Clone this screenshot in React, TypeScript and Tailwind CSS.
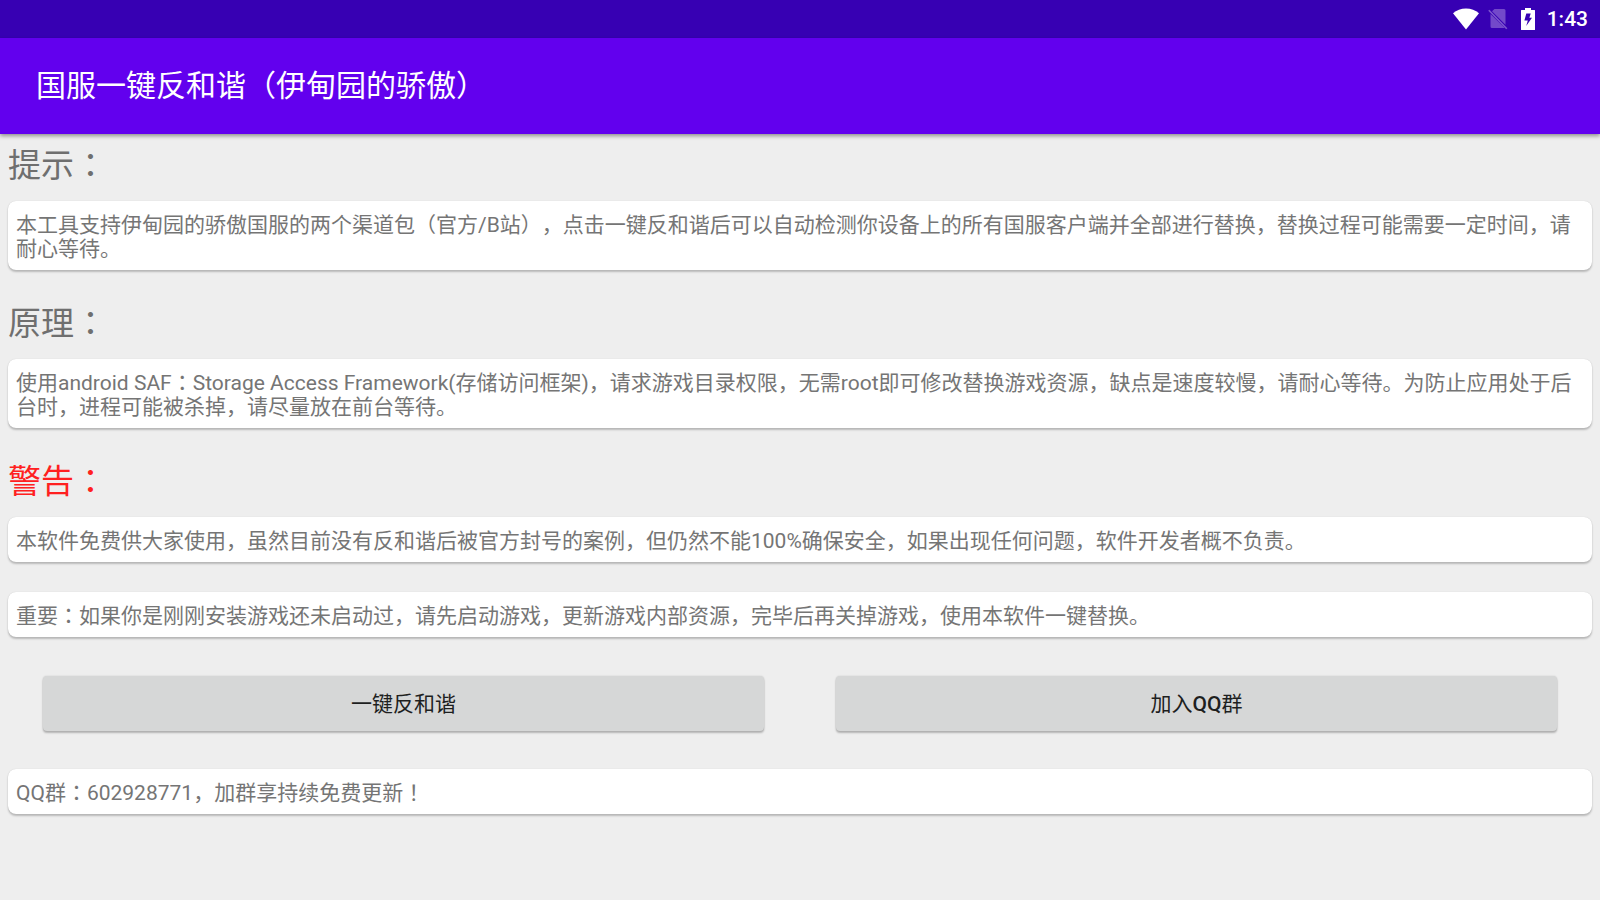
import { Fragment, type ReactNode } from "react";

/* Colons and exclamation marks are set in the middle of their full-width box. */
function Text({ children }: { children: string }) {
  return (
    <>
      {children.split(/([：！])/).map((part, i) =>
        part === "：" || part === "！" ? (
          <span key={i} lang="zh-TW" className="font-[Roboto,'Noto_Sans_CJK_TC',sans-serif]">
            {part}
          </span>
        ) : (
          <Fragment key={i}>{part}</Fragment>
        ),
      )}
    </>
  );
}

function Heading({ children, className = "text-[#6f6f6f]" }: { children: string; className?: string }) {
  return (
    <h2 className={`px-2 pt-[9px] pb-3 text-[33px] leading-[46px] ${className}`}>
      <Text>{children}</Text>
    </h2>
  );
}

function Card({ children }: { children: string }) {
  return (
    <p className="mx-2 mb-[22px] rounded-lg bg-white px-2 pt-3 pb-[9px] text-[21px] leading-6 text-[#757575] shadow-[0_2px_2px_rgba(0,0,0,0.22),0_0_1px_rgba(0,0,0,0.18)]">
      <Text>{children}</Text>
    </p>
  );
}

function ActionButton({ children }: { children: ReactNode }) {
  return (
    <button
      type="button"
      className="h-[55px] flex-1 cursor-pointer rounded-[4px] bg-[#d6d7d7] text-[21px] leading-6 text-[#1e1f1f] shadow-[0_2px_2px_rgba(0,0,0,0.24),0_0_2px_rgba(0,0,0,0.14)]"
    >
      {children}
    </button>
  );
}

function StatusBar() {
  return (
    <div className="flex h-[38px] items-center justify-end bg-[#3700b3] pr-3 text-white">
      <svg className="mr-2 h-[22px] w-7" viewBox="0 0 28 22" fill="currentColor" aria-hidden="true">
        <path d="M14 21.500 1 5.200C4.500 2.200 9 .5 14 .5s9.500 1.700 13 4.700z" />
      </svg>
      <svg className="mr-[13px] h-[22px] w-5" viewBox="0 0 20 22" aria-hidden="true">
        <path d="M6.500 1H16a1.500 1.500 0 0 1 1.500 1.500v14.200L4 3.300zM2.500 6l14.300 14H4a1.500 1.500 0 0 1-1.500-1.500z" fill="#7349ca" />
        <path d="M.8 2.300 18.800 20.800" stroke="#7c56cd" strokeWidth="1.600" />
      </svg>
      <svg className="mr-3 h-[22px] w-[14px]" viewBox="0 0 14 22" aria-hidden="true">
        <path d="M4 0h6v2h3.500a.5.5 0 0 1 .5.5v19a.5.5 0 0 1-.5.5H.5a.5.5 0 0 1-.5-.5v-19A.5.5 0 0 1 .5 2H4z" fill="white" />
        <path d="M5.300 5.500h4.400L8.400 9.700h2.600L5.200 18l1.600-5.400H3.400z" fill="#3700b3" />
      </svg>
      <time className="text-[21px] leading-6 font-medium">1:43</time>
    </div>
  );
}

export default function App() {
  return (
    <div
      lang="zh-CN"
      className="flex min-h-screen flex-col bg-[#eeeeee] font-[Roboto,'Noto_Sans_CJK_SC',sans-serif] [text-spacing-trim:space-all]"
    >
      <StatusBar />
      <header className="flex h-24 items-center bg-[#6200ee] px-9 text-white shadow-[0_2px_4px_rgba(0,0,0,0.4)]">
        <h1 className="text-[30px] leading-9">国服一键反和谐（伊甸园的骄傲）</h1>
      </header>
      <main>
        <Heading>提示：</Heading>
        <Card>本工具支持伊甸园的骄傲国服的两个渠道包（官方/B站），点击一键反和谐后可以自动检测你设备上的所有国服客户端并全部进行替换，替换过程可能需要一定时间，请耐心等待。</Card>
        <Heading>原理：</Heading>
        <Card>使用android SAF：Storage Access Framework(存储访问框架)，请求游戏目录权限，无需root即可修改替换游戏资源，缺点是速度较慢，请耐心等待。为防止应用处于后台时，进程可能被杀掉，请尽量放在前台等待。</Card>
        <Heading className="text-[#ff2020]">警告：</Heading>
        <Card>本软件免费供大家使用，虽然目前没有反和谐后被官方封号的案例，但仍然不能100%确保安全，如果出现任何问题，软件开发者概不负责。</Card>
        <div className="pt-2">
          <Card>重要：如果你是刚刚安装游戏还未启动过，请先启动游戏，更新游戏内部资源，完毕后再关掉游戏，使用本软件一键替换。</Card>
        </div>
        <div className="flex gap-[72px] px-[43px] pt-[17px] pb-[38px]">
          <ActionButton>一键反和谐</ActionButton>
          <ActionButton>
            加入<span className="font-medium">QQ</span>群
          </ActionButton>
        </div>
        <Card>QQ群：602928771，加群享持续免费更新！</Card>
      </main>
    </div>
  );
}
